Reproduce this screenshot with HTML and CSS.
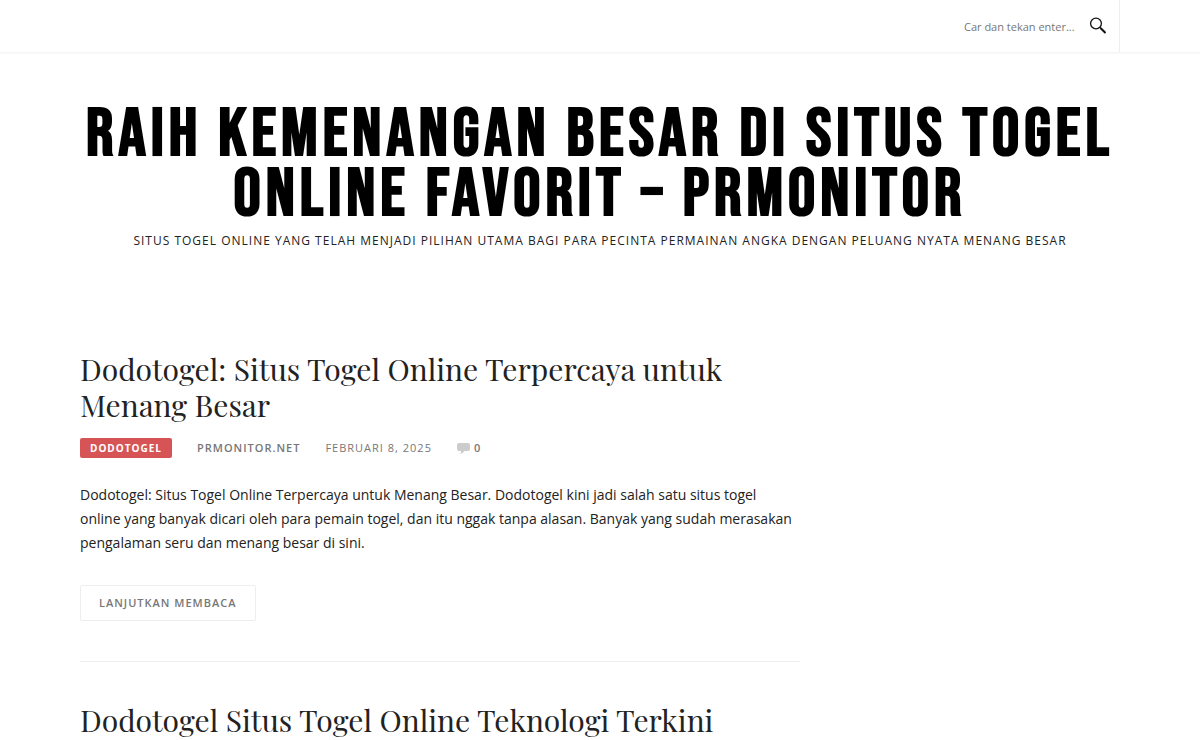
FILE: index.html
```
<!DOCTYPE html>
<html lang="id">
<head>
  <meta charset="UTF-8">
  <meta name="viewport" content="width=device-width, initial-scale=1">
  <title>Raih Kemenangan Besar di Situs Togel Online Favorit – Prmonitor</title>
  <link rel="stylesheet" href="styles.css">
</head>
<body>
  <div class="site-topbar">
    <div class="container">
      <form class="topbar-search" role="search">
        <input type="search" class="search-field" placeholder="Car dan tekan enter..." aria-label="Cari">
        <button type="submit" class="search-submit" aria-label="Cari">
          <svg width="18" height="18" viewBox="0 0 18 18" fill="none" stroke="#111">
            <circle cx="7" cy="6.500" r="5.400" stroke-width="1.300"/>
            <path d="M10.800 10.300l1.400 1.400" stroke-width="1.400"/>
            <path d="M11.800 11.300l4.700 4.700" stroke-width="2"/>
          </svg>
        </button>
      </form>
    </div>
  </div>

  <header class="site-header container">
    <h1 class="site-title"><a href="#">Raih Kemenangan Besar di Situs Togel Online Favorit – Prmonitor</a></h1>
    <p class="site-description">Situs togel online yang telah menjadi pilihan utama bagi para pecinta permainan angka dengan peluang nyata menang besar</p>
  </header>

  <div class="site-content container">
    <main class="content-area">
      <article class="post">
        <h2 class="entry-title"><a href="#">Dodotogel: Situs Togel Online Terpercaya untuk Menang Besar</a></h2>
        <div class="entry-meta">
          <a href="#" class="entry-cate">Dodotogel</a>
          <a href="#" class="author">prmonitor.net</a>
          <time datetime="2025-02-08">Februari 8, 2025</time>
          <a href="#" class="comments-link">
            <svg width="13" height="11" viewBox="0 0 13 11" fill="#ccc">
              <path d="M2 0h9q2 0 2 2v4q0 2-2 2H7.500Q6 10.500 3 11Q4.300 9.800 4 8H2Q0 8 0 6V2Q0 0 2 0z"/>
            </svg>
            0
          </a>
        </div>
        <div class="entry-summary">
          <p>Dodotogel: Situs Togel Online Terpercaya untuk Menang Besar. Dodotogel kini jadi salah satu situs togel online yang banyak dicari oleh para pemain togel, dan itu nggak tanpa alasan. Banyak yang sudah merasakan pengalaman seru dan menang besar di sini.</p>
        </div>
        <a href="#" class="entry-more">Lanjutkan membaca</a>
      </article>

      <article class="post">
        <h2 class="entry-title"><a href="#">Dodotogel Situs Togel Online Teknologi Terkini</a></h2>
      </article>
    </main>
  </div>
</body>
</html>
```
FILE: styles.css
```
* {
  box-sizing: border-box;
}

body {
  margin: 0;
  background: #fff;
  color: #222;
  font-family: "Open Sans", sans-serif;
  font-size: 14px;
  line-height: 24px;
}

h1,
h2,
p {
  margin: 0;
}

a {
  color: inherit;
  text-decoration: none;
}

.container {
  width: 100%;
  max-width: 1040px;
  margin: 0 auto;
}

/* Top bar */
.site-topbar {
  border-bottom: 1px solid #f5f5f5;
  box-shadow: 0 1px 2px rgba(0, 0, 0, 0.03);
}

.site-topbar .container {
  display: flex;
  justify-content: flex-end;
}

.topbar-search {
  display: flex;
  align-items: center;
  height: 52px;
  padding-right: 12px;
  border-right: 1px solid #eee;
}

.search-field {
  width: 125px;
  padding: 2px 0 0;
  border: 0;
  outline: 0;
  background: none;
  font: 11px/20px "Open Sans", sans-serif;
  appearance: none;
}

.search-field::placeholder {
  color: #777;
}

.search-submit {
  display: flex;
  padding: 0;
  border: 0;
  background: none;
  cursor: pointer;
}

/* Header */
.site-header {
  padding: 52px 0 98px;
  text-align: center;
}

.site-title {
  color: #000;
  font-family: "Norwester", "Bebas Neue", "Oswald", "Roboto Condensed", sans-serif;
  font-size: 68px;
  font-weight: 700;
  line-height: 60px;
  letter-spacing: 5px;
  text-transform: uppercase;
}

.site-description {
  margin-top: 4px;
  font-size: 12px;
  letter-spacing: 1px;
  text-transform: uppercase;
}

/* Posts */
.content-area {
  max-width: 720px;
}

.post {
  margin-bottom: 40px;
  padding-bottom: 40px;
  border-bottom: 1px solid #eee;
}

.post:last-child {
  margin-bottom: 0;
  padding-bottom: 0;
  border-bottom: 0;
}

.entry-title {
  font-family: "Playfair Display", "Liberation Serif", serif;
  font-size: 30px;
  font-weight: 400;
  line-height: 36px;
}

.entry-meta {
  display: flex;
  align-items: center;
  gap: 25px;
  margin: 15px 0 25px;
  color: #777;
  font-size: 11px;
  line-height: 20px;
  letter-spacing: 1px;
  text-transform: uppercase;
}

.entry-cate {
  padding: 0 10px;
  border-radius: 2px;
  background: #d65456;
  color: #fff;
  font-size: 10px;
  font-weight: 700;
}

.author,
.comments-link {
  font-weight: 600;
}

.comments-link {
  display: flex;
  align-items: center;
  gap: 4px;
}

.entry-more {
  display: inline-block;
  margin-top: 30px;
  padding: 0 18px;
  border: 1px solid #eee;
  border-radius: 2px;
  color: #777;
  font-size: 11px;
  font-weight: 600;
  line-height: 34px;
  letter-spacing: 1px;
  text-transform: uppercase;
}
```
